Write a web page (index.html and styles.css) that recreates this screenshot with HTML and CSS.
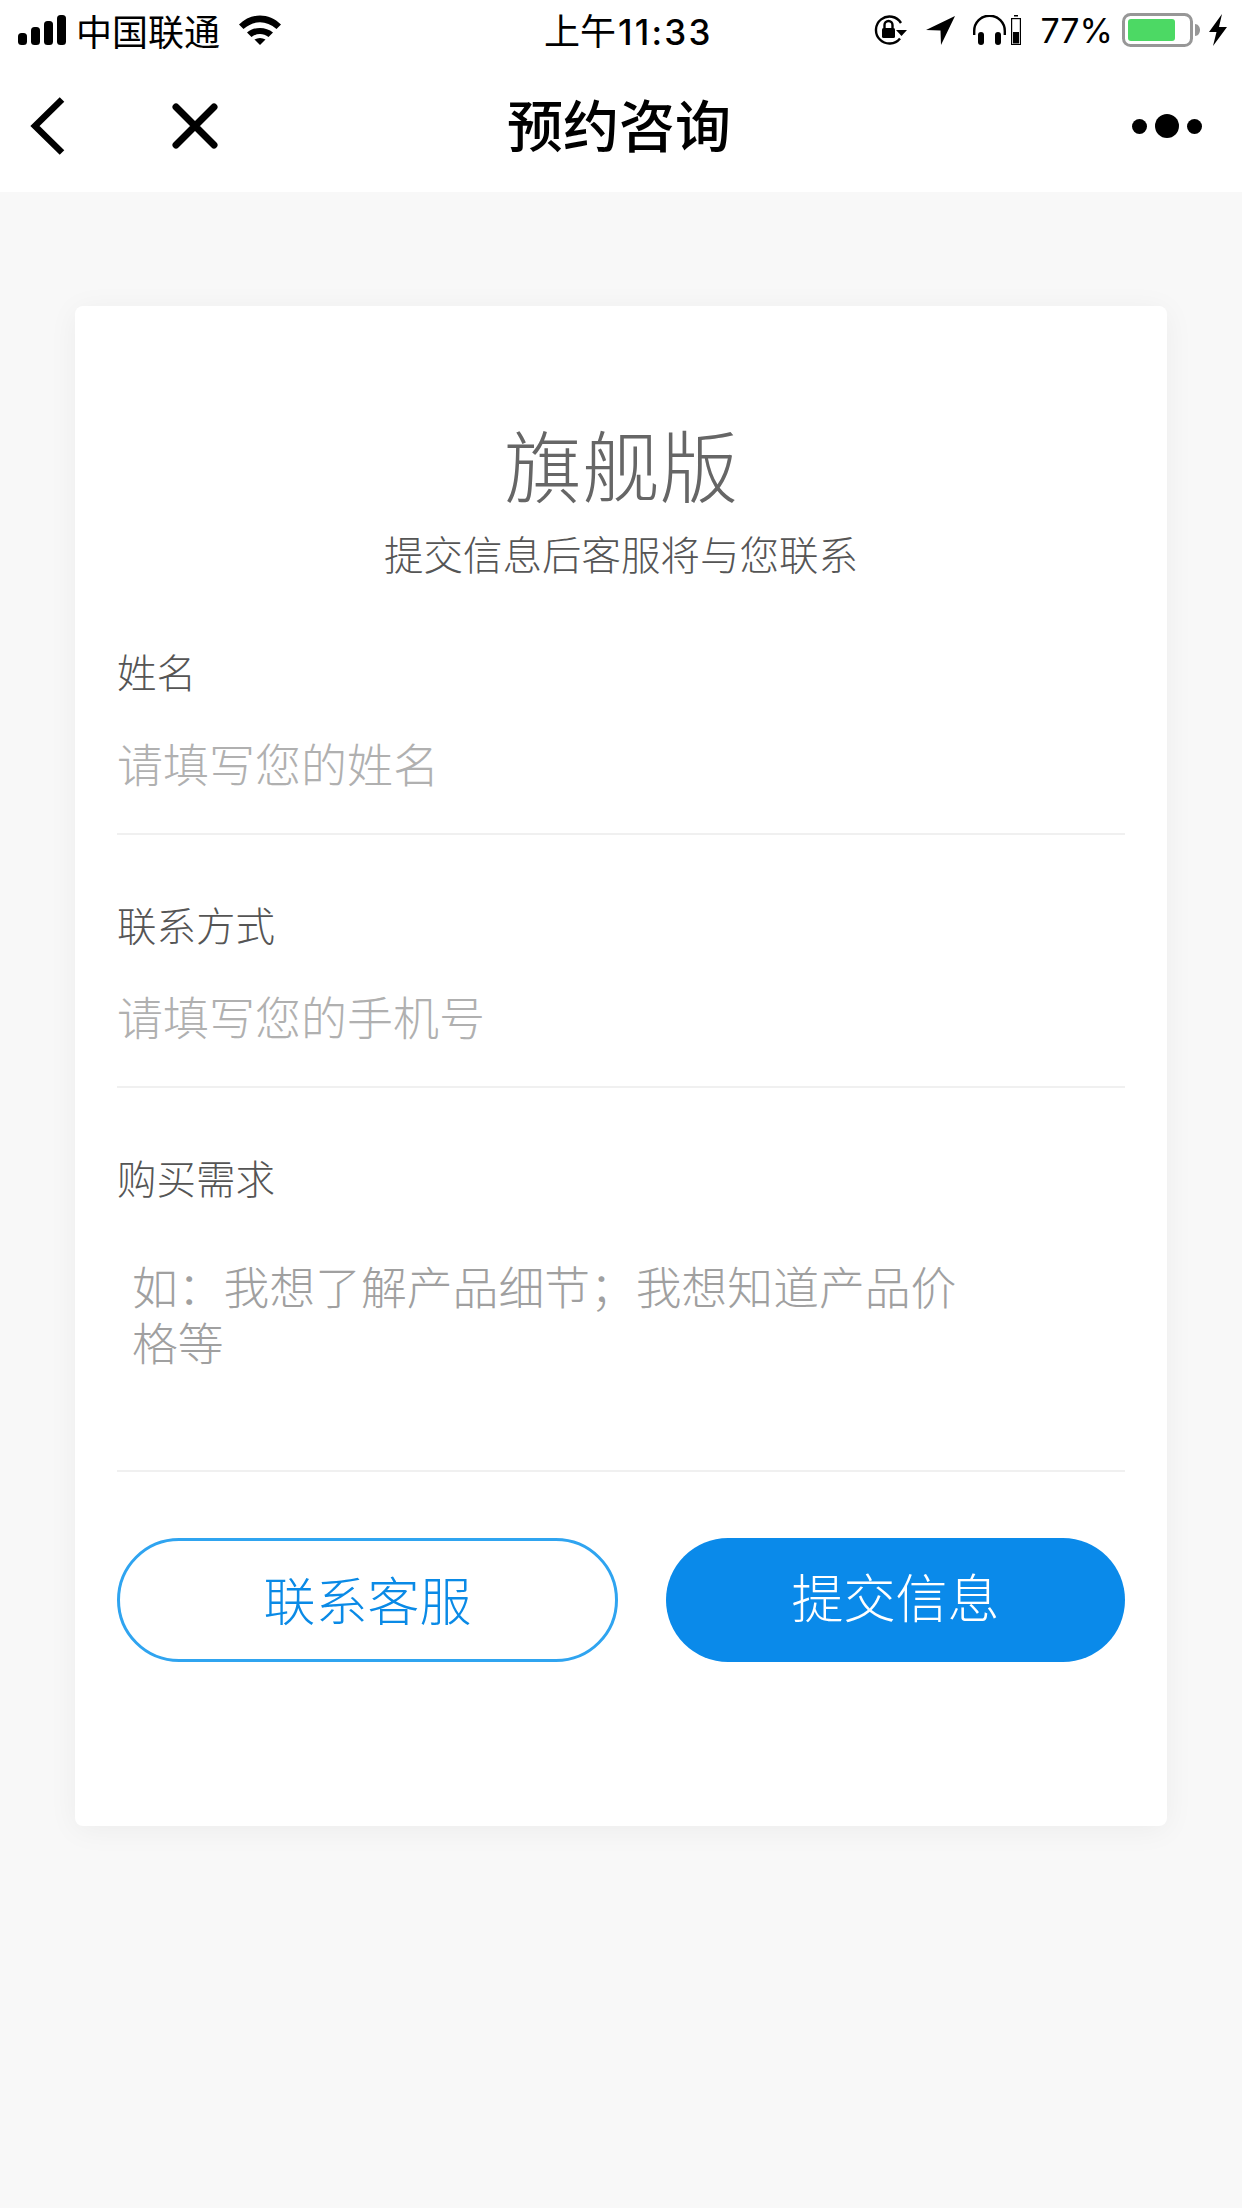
FILE: index.html
```html
<!DOCTYPE html>
<html lang="zh-CN">
<head>
    <meta charset="UTF-8">
    <meta name="viewport" content="width=device-width, initial-scale=1.0">
    <title>预约咨询</title>
    <link rel="stylesheet" href="styles.css">
</head>
<body>
    <!-- Status bar -->
    <div class="status-bar">
        <div class="status-left">
            <svg class="signal" width="48" height="30" viewBox="0 0 48 30">
                <rect x="0" y="18" width="9" height="12" rx="3.5"/>
                <rect x="13" y="12" width="9" height="18" rx="3.5"/>
                <rect x="26" y="6" width="9" height="24" rx="3.5"/>
                <rect x="39" y="0" width="9" height="30" rx="3.5"/>
            </svg>
            <span class="carrier">中国联通</span>
            <svg class="wifi" width="42" height="30" viewBox="0 0 42 30">
                <path d="M0 9.500 C12 -2.500 30 -2.500 42 9.500 L37.500 14 C27 5 15 5 4.500 14 Z"/>
                <path d="M8 17.500 C15 11.500 27 11.500 34 17.500 L29.500 22 C24.500 18 17.500 18 12.500 22 Z"/>
                <path d="M15.500 24.500 C19 22.500 23 22.500 26.500 24.500 L21 30 Z"/>
            </svg>
        </div>
        <div class="status-time">上午<span class="digits">11:33</span></div>
        <div class="status-right">
            <svg class="lock" width="34" height="30" viewBox="0 0 34 30">
                <path d="M27 23.500 A13.500 13.500 0 1 1 28 8" fill="none" stroke="#000" stroke-width="2.400"/>
                <path d="M23 15 L34 15 L28.500 21 Z"/>
                <rect x="9" y="13" width="13" height="10" rx="1.500"/>
                <path d="M11.500 13 V10 A4 4 0 0 1 19.500 10 V13" fill="none" stroke="#000" stroke-width="2.400"/>
            </svg>
            <svg class="arrow" width="29" height="30" viewBox="0 0 29 30">
                <path d="M0 15 L29 1 L15 30 L14.500 15.500 Z"/>
            </svg>
            <svg class="headphones" width="48" height="30" viewBox="0 0 48 30">
                <path d="M1.200 20 V16 A15.300 15.300 0 0 1 31.800 16 V20" fill="none" stroke="#000" stroke-width="2.400"/>
                <rect x="5" y="17" width="6" height="13" rx="3"/>
                <rect x="22" y="17" width="6" height="13" rx="3"/>
                <rect x="38.600" y="3.600" width="8.800" height="26" fill="none" stroke="#000" stroke-width="1.200"/>
                <rect x="40" y="17" width="6" height="11.500"/>
                <rect x="41" y="0" width="4" height="1.500"/>
            </svg>
            <span class="percent">77%</span>
            <svg class="battery" width="78" height="34" viewBox="0 0 78 34">
                <rect x="1.500" y="1.500" width="68" height="31" rx="7" fill="none" stroke="#979797" stroke-width="3"/>
                <rect x="6" y="6" width="47" height="22" rx="3" fill="#4cd964"/>
                <path d="M73 11 C76 11 78 14 78 17 C78 20 76 23 73 23 Z" fill="#979797"/>
            </svg>
            <svg class="bolt" width="18" height="32" viewBox="0 0 18 32">
                <path d="M13 0 L0 18 L7.500 18 L4 32 L18 13 L10 13 Z"/>
            </svg>
        </div>
    </div>

    <!-- Nav bar -->
    <div class="nav-bar">
        <div class="nav-left">
            <svg class="back" width="36" height="60" viewBox="0 0 36 60">
                <path d="M32 3.500 L5 30 L32 56.500" fill="none" stroke="#000" stroke-width="6.500"/>
            </svg>
            <svg class="close" width="46" height="46" viewBox="0 0 46 46">
                <path d="M4 4 L42 42 M42 4 L4 42" fill="none" stroke="#000" stroke-width="7" stroke-linecap="round"/>
            </svg>
        </div>
        <div class="nav-title">预约咨询</div>
        <div class="nav-more">
            <span class="dot"></span>
            <span class="dot dot-big"></span>
            <span class="dot"></span>
        </div>
    </div>

    <!-- Form card -->
    <div class="page">
        <div class="card">
            <h1 class="card-title">旗舰版</h1>
            <p class="card-sub">提交信息后客服将与您联系</p>

            <div class="field">
                <div class="field-label">姓名</div>
                <div class="field-input">请填写您的姓名</div>
            </div>
            <div class="field">
                <div class="field-label">联系方式</div>
                <div class="field-input">请填写您的手机号</div>
            </div>
            <div class="field field-area">
                <div class="field-label">购买需求</div>
                <div class="field-text">如：我想了解产品细节；我想知道产品价<br>格等</div>
            </div>

            <div class="buttons">
                <button class="btn btn-outline">联系客服</button>
                <button class="btn btn-solid">提交信息</button>
            </div>
        </div>
    </div>
</body>
</html>
```

FILE: styles.css
```css
* {
    box-sizing: border-box;
}

html, body {
    margin: 0;
    padding: 0;
}

body {
    width: 1242px;
    height: 2208px;
    overflow: hidden;
    background-color: #f8f8f8;
    font-family: "Noto Sans CJK SC", "Noto Sans", sans-serif;
    color: #000;
}

.status-bar {
    display: flex;
    align-items: center;
    height: 60px;
    padding: 0 15px 0 18px;
    background: #fff;
}

.status-left {
    display: flex;
    align-items: center;
    width: 526px;
}

.status-right {
    display: flex;
    align-items: center;
    margin-left: auto;
}

.status-right svg, .status-left svg {
    display: block;
}

.carrier {
    font-size: 36px;
    margin-left: 10px;
    margin-right: 19px;
}

.status-time {
    font-size: 36px;
    line-height: 44px;
}

.digits {
    font-family: "Inter", sans-serif;
    font-size: 35px;
    font-weight: 500;
    letter-spacing: 2.200px;
    margin-left: 2px;
}

.lock {
    margin-right: 19px;
}

.arrow {
    margin-right: 18px;
}

.headphones {
    margin-right: 19px;
}

.percent {
    font-family: "Inter", sans-serif;
    font-size: 34px;
    margin-right: 9px;
}

.battery {
    margin-right: 9px;
}

.nav-bar {
    display: grid;
    grid-template-columns: 1fr auto 1fr;
    align-items: center;
    height: 132px;
    padding: 0 40px 0 30px;
    background: #fff;
}

.nav-left {
    display: flex;
    align-items: center;
    gap: 106px;
}

.nav-title {
    padding: 0 0 8px 6px;
    font-size: 56px;
    font-weight: 500;
}

.nav-more {
    display: flex;
    align-items: center;
    justify-content: flex-end;
    gap: 8px;
}

.dot {
    width: 15px;
    height: 15px;
    border-radius: 50%;
    background: #000;
}

.dot-big {
    width: 24px;
    height: 24px;
}

.page {
    padding: 114px 75px 0;
}

.card {
    height: 1520px;
    padding: 107px 42px 0;
    background: #fff;
    border-radius: 8px;
    box-shadow: 0 4px 30px rgba(0, 0, 0, 0.05);
}

.card-title {
    margin: 0;
    text-align: center;
    font-size: 78px;
    line-height: 100px;
    font-weight: 300;
    color: #666;
}

.card-sub {
    margin: 13px 0 2px;
    text-align: center;
    font-size: 39.500px;
    line-height: 54px;
    font-weight: 300;
    color: #555;
}

.field {
    height: 253px;
    padding-top: 59px;
    border-bottom: 2px solid #f0f0f0;
}

.field-label {
    font-size: 39.500px;
    line-height: 60px;
    font-weight: 300;
    color: #555;
}

.field-input {
    margin-top: 31px;
    font-size: 46px;
    line-height: 60px;
    font-weight: 300;
    color: #b0b0b0;
}

.field-area {
    height: 384px;
}

.field-text {
    margin-top: 50px;
    padding-left: 15px;
    font-size: 45.800px;
    line-height: 56px;
    font-weight: 300;
    color: #a0a0a0;
}

.buttons {
    display: flex;
    justify-content: space-between;
    margin-top: 66px;
}

.btn {
    height: 124px;
    border-radius: 62px;
    font-family: inherit;
    font-size: 52px;
    font-weight: 300;
    padding: 0 0 3px;
}

.btn-outline {
    width: 501px;
    background: #fff;
    color: #0a8ae6;
    border: 3px solid #2fa4f0;
}

.btn-solid {
    width: 459px;
    padding-bottom: 10px;
    background: #0a8aea;
    color: #fff;
    border: none;
}
```
